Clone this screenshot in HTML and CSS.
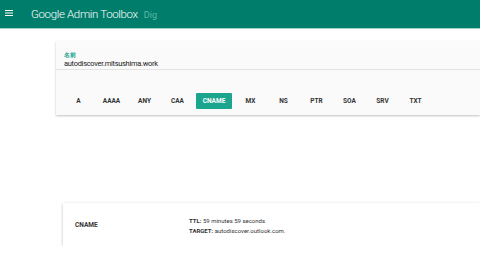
FILE: index.html
```html
<!DOCTYPE html>
<html lang="ja">
<head>
    <meta charset="UTF-8">
    <meta name="viewport" content="width=device-width, initial-scale=1.0">
    <title>Google Admin Toolbox Dig</title>
    <link rel="stylesheet" href="styles.css">
</head>
<body>
    <header class="toolbar">
        <svg class="menu" width="8" height="6" viewBox="0 0 8 6">
            <rect x="0" y="0" width="8" height="1" fill="#fff"/>
            <rect x="0" y="2.5" width="8" height="1" fill="#fff"/>
            <rect x="0" y="5" width="8" height="1" fill="#fff"/>
        </svg>
        <span class="title">Google Admin Toolbox</span>
        <span class="sub">Dig</span>
    </header>

    <div class="query">
        <div class="field">
            <label class="label">名前</label>
            <div class="value">autodiscover.mitsushima.work</div>
        </div>
        <div class="types">
            <button class="type">A</button>
            <button class="type">AAAA</button>
            <button class="type">ANY</button>
            <button class="type">CAA</button>
            <button class="type active">CNAME</button>
            <button class="type">MX</button>
            <button class="type">NS</button>
            <button class="type">PTR</button>
            <button class="type">SOA</button>
            <button class="type">SRV</button>
            <button class="type">TXT</button>
        </div>
    </div>

    <div class="result">
        <div class="rtype">CNAME</div>
        <div class="rdata">
            <div><b>TTL:</b> 59 minutes 59 seconds</div>
            <div><b>TARGET:</b> autodiscover.outlook.com.</div>
        </div>
    </div>
</body>
</html>
```

FILE: styles.css
```css
body {
    font-family: Roboto, Arial, sans-serif;
    margin: 0;
    background-color: #fff;
    color: #333;
    overflow: hidden;
}
.toolbar {
    height: 28px;
    background-color: #017d6b;
    border-bottom: 1px solid #9fd3ca;
    display: flex;
    align-items: center;
    padding-left: 5px;
}
.menu {
    margin-right: 18px;
    margin-top: -2px;
}
.title {
    color: #fff;
    font-size: 11.5px;
    font-weight: 300;
    letter-spacing: -0.35px;
}
.sub {
    color: #5fb8a6;
    font-size: 9px;
    margin-left: 6px;
    margin-top: 2px;
}
.query {
    margin: 12px 0 0 56px;
    background-color: #fafafa;
    box-shadow: 0 1px 2px rgba(0,0,0,0.25);
    height: 74px;
}
.field {
    padding: 10px 0 0 8px;
    height: 18px;
    border-bottom: 1px solid #e3e3e3;
}
.label {
    display: block;
    color: #1ba58f;
    font-size: 6px;
    font-weight: bold;
    line-height: 7px;
}
.value {
    font-size: 7.5px;
    line-height: 11px;
    color: #222;
    letter-spacing: -0.3px;
}
.types {
    display: flex;
    padding: 23px 0 0 6px;
}
.type {
    min-width: 33px;
    height: 16px;
    padding: 0 4px;
    border: none;
    border-radius: 1px;
    background: none;
    font-family: Roboto, Arial, sans-serif;
    font-size: 6.5px;
    font-weight: bold;
    color: #333;
}
.active {
    background-color: #1ba58f;
    color: #fff;
    min-width: 36px;
    margin: 0 2px;
}
.result {
    margin: 88px 0 0 63px;
    height: 43px;
    background-color: #fff;
    box-shadow: 0 1px 3px rgba(0,0,0,0.25);
    display: flex;
    align-items: center;
    font-size: 6px;
}
.rtype {
    width: 114px;
    padding-left: 12px;
    font-weight: bold;
    font-size: 6.5px;
}
.rdata {
    line-height: 10px;
    margin-top: 3px;
}
```
